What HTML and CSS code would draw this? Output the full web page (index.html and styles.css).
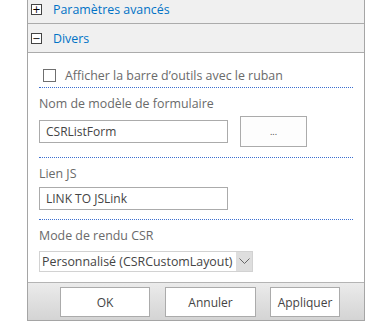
FILE: index.html
```html
<!DOCTYPE html>
<html lang="fr">
  <head>
    <meta charset="UTF-8" />
    <title>Propriétés du composant WebPart</title>
    <link rel="stylesheet" href="styles.css">
  </head>
  <body>
    <div class="panel">
      <div class="section-head">
        <span class="toggle">+</span>
        <span class="section-title">Paramètres avancés</span>
      </div>
      <div class="section-head">
        <span class="toggle">−</span>
        <span class="section-title">Divers</span>
      </div>

      <div class="section-body">
        <div class="group group-check">
          <label class="check-row">
            <span class="checkbox"></span>
            <span>Afficher la barre d’outils avec le ruban</span>
          </label>
        </div>

        <div class="group">
          <div class="field-label">Nom de modèle de formulaire</div>
          <div class="field-row">
            <input class="text-input" type="text" value="CSRListForm">
            <button class="browse-btn">...</button>
          </div>
        </div>

        <div class="group">
          <div class="field-label">Lien JS</div>
          <div class="field-row">
            <input class="text-input" type="text" value="LINK TO JSLink">
          </div>
        </div>

        <div class="group group-last">
          <div class="field-label">Mode de rendu CSR</div>
          <div class="select">
            <span class="select-value">Personnalisé (CSRCustomLayout)</span>
            <span class="select-arrow">
              <svg width="11" height="7" viewBox="0 0 11 7"><path d="M0.5 0.5 L5.5 5.5 L10.5 0.5" fill="none" stroke="#666" stroke-width="1"/></svg>
            </span>
          </div>
        </div>
      </div>

      <div class="footer">
        <button class="btn btn-ok">OK</button>
        <button class="btn btn-cancel">Annuler</button>
        <button class="btn btn-apply">Appliquer</button>
      </div>
    </div>
  </body>
</html>
```

FILE: styles.css
```css
body {
  margin: 0;
  background: #fff;
  font-family: "Open Sans", "Liberation Sans", sans-serif;
  font-size: 12px;
  overflow: hidden;
}
.panel {
  margin: -5px 0 0 27px;
  width: 336px;
  border: 1px solid #a5a5a5;
  border-top: none;
}
.section-head {
  display: flex;
  align-items: center;
  height: 28px;
  background: #f0f0f0;
  border-bottom: 1px solid #ababab;
  padding-left: 3px;
}
.toggle {
  width: 9px;
  height: 9px;
  border: 1px solid #444;
  background: #fff;
  display: flex;
  align-items: center;
  justify-content: center;
  font-family: "DejaVu Sans", sans-serif;
  font-size: 10px;
  line-height: 9px;
  color: #000;
  margin-right: 11px;
}
.section-title {
  color: #0072c6;
  font-size: 12.4px;
}
.section-body {
  padding: 0 11px;
}
.group {
  border-bottom: 1px dotted #3b6fd0;
  padding-bottom: 9px;
}
.group-check {
  padding: 11px 0 0;
  height: 23px;
}
.group-last {
  border-bottom: none;
  padding-bottom: 10px;
}
.check-row {
  display: flex;
  align-items: center;
  height: 23px;
  padding-left: 4px;
  color: #6a6a6a;
  font-size: 12.4px;
}
.checkbox {
  width: 11px;
  height: 11px;
  border: 1px solid #6f6f6f;
  background: #fff;
  margin-right: 9px;
}
.field-label {
  margin-top: 7px;
  line-height: 18px;
  color: #6a6a6a;
  font-size: 12.4px;
}
.field-row {
  display: flex;
  align-items: center;
  gap: 12px;
  margin-top: 4px;
}
.group:nth-child(2) .field-row {
  margin-top: 3px;
  height: 31px;
  padding-bottom: 1px;
}
.text-input {
  box-sizing: border-box;
  width: 189px;
  height: 23px;
  border: 1px solid #ababab;
  padding: 0 6px;
  font-family: inherit;
  font-size: 12px;
  color: #444;
  margin: 0;
}
.browse-btn {
  box-sizing: border-box;
  width: 67px;
  height: 31px;
  border: 1px solid #ababab;
  background: #fdfdfd;
  font-family: inherit;
  font-size: 9px;
  color: #444;
  padding: 0;
  margin: 0;
}
.select {
  display: flex;
  align-items: stretch;
  box-sizing: border-box;
  width: 214px;
  height: 21px;
  margin-top: 6px;
  border: 1px solid #d2d2d2;
}
.select-value {
  flex: 1;
  padding-left: 2px;
  line-height: 19px;
  font-size: 12.4px;
  color: #444;
  white-space: nowrap;
}
.select-arrow {
  width: 16px;
  background: #dedede;
  display: flex;
  align-items: center;
  justify-content: center;
}
.footer {
  display: flex;
  justify-content: flex-end;
  gap: 14px;
  height: 38px;
  padding: 4px 24px 0 0;
  box-sizing: border-box;
  border-top: 1px solid #b4b4b4;
  background: linear-gradient(#ebebeb, #d4d4d4);
}
.btn {
  box-sizing: border-box;
  height: 30px;
  border: 1px solid #ababab;
  background: #fff;
  font-family: inherit;
  font-size: 12px;
  color: #444;
  margin: 0;
  padding: 0;
}
.btn-ok { width: 90px; margin-right: 1px; }
.btn-cancel { width: 91px; }
.btn-apply { width: 70px; }
```
